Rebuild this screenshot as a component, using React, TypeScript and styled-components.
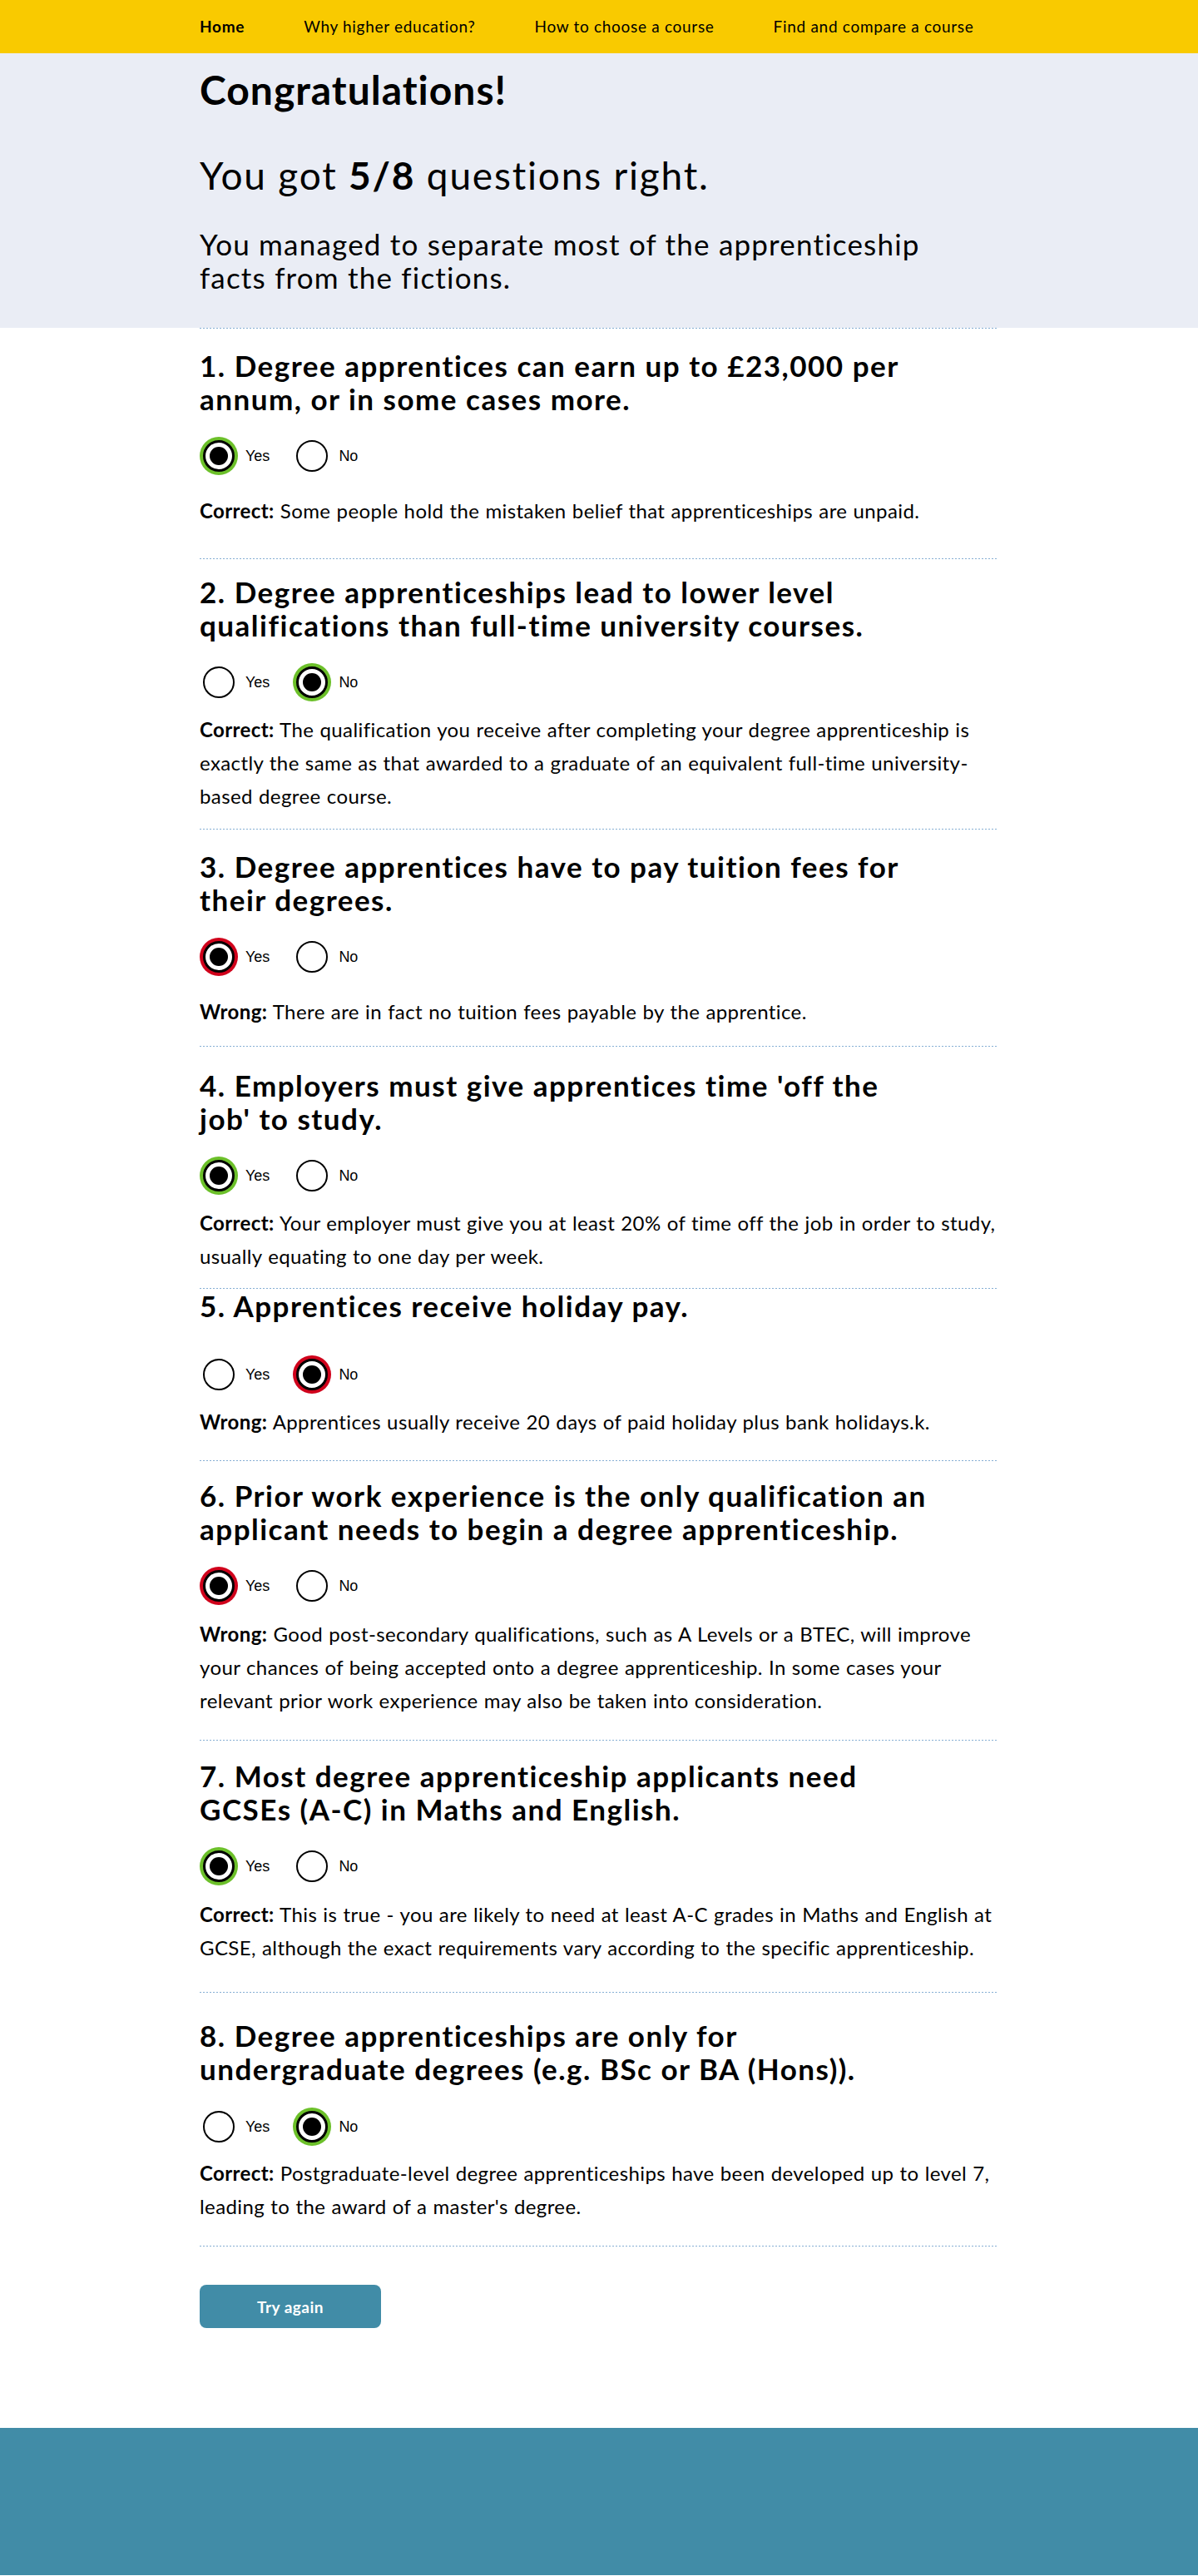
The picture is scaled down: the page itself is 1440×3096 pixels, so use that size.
import React from "react";
import styled, { createGlobalStyle, css } from "styled-components";

const GlobalStyle = createGlobalStyle`
  html, body { margin: 0; padding: 0; background: #ffffff; }
  body {
    font-family: Lato, "Open Sans", Arial, sans-serif;
    color: #000000;
    -webkit-font-smoothing: antialiased;
  }
  * { box-sizing: border-box; }
`;

type Status = "correct" | "wrong";
type Choice = "yes" | "no";

interface Spacing { t: number; m1: number; m2: number; b: number }
interface Question {
  n: number;
  title: string;
  choice: Choice;
  status: Status;
  explanation: string;
  sp: Spacing;
}

const questions: Question[] = [
  {
    n: 1,
    title: "Degree apprentices can earn up to £23,000 per annum, or in some cases more.",
    choice: "yes",
    status: "correct",
    explanation: "Some people hold the mistaken belief that apprenticeships are unpaid.",
    sp: { t: 24, m1: 30, m2: 27, b: 37 },
  },
  {
    n: 2,
    title: "Degree apprenticeships lead to lower level qualifications than full-time university courses.",
    choice: "no",
    status: "correct",
    explanation:
      "The qualification you receive after completing your degree apprenticeship is exactly the same as that awarded to a graduate of an equivalent full-time university-based degree course.",
    sp: { t: 19, m1: 30, m2: 18, b: 19 },
  },
  {
    n: 3,
    title: "Degree apprentices have to pay tuition fees for their degrees.",
    choice: "yes",
    status: "wrong",
    explanation: "There are in fact no tuition fees payable by the apprentice.",
    sp: { t: 24, m1: 30, m2: 27, b: 21 },
  },
  {
    n: 4,
    title: "Employers must give apprentices time 'off the job' to study.",
    choice: "yes",
    status: "correct",
    explanation:
      "Your employer must give you at least 20% of time off the job in order to study, usually equating to one day per week.",
    sp: { t: 26, m1: 30, m2: 18, b: 18 },
  },
  {
    n: 5,
    title: "Apprentices receive holiday pay.",
    choice: "no",
    status: "wrong",
    explanation: "Apprentices usually receive 20 days of paid holiday plus bank holidays.k.",
    sp: { t: 0, m1: 44, m2: 18, b: 26 },
  },
  {
    n: 6,
    title: "Prior work experience is the only qualification an applicant needs to begin a degree apprenticeship.",
    choice: "yes",
    status: "wrong",
    explanation:
      "Good post-secondary qualifications, such as A Levels or a BTEC, will improve your chances of being accepted onto a degree apprenticeship. In some cases your relevant prior work experience may also be taken into consideration.",
    sp: { t: 21, m1: 30, m2: 19, b: 27 },
  },
  {
    n: 7,
    title: "Most degree apprenticeship applicants need GCSEs (A-C) in Maths and English.",
    choice: "yes",
    status: "correct",
    explanation:
      "This is true - you are likely to need at least A-C grades in Maths and English at GCSE, although the exact requirements vary according to the specific apprenticeship.",
    sp: { t: 22, m1: 30, m2: 19, b: 33 },
  },
  {
    n: 8,
    title: "Degree apprenticeships are only for undergraduate degrees (e.g. BSc or BA (Hons)).",
    choice: "no",
    status: "correct",
    explanation:
      "Postgraduate-level degree apprenticeships have been developed up to level 7, leading to the award of a master's degree.",
    sp: { t: 31, m1: 31, m2: 17, b: 27 },
  },
];

const RING = { correct: "#6cc02a", wrong: "#d0021b" };
const DOT_COLOR = "#86afd4";
const dottedLine = (side: "top" | "bottom") => css`
  background-image: linear-gradient(to right, ${DOT_COLOR} 50%, transparent 50%);
  background-size: 4px 1px;
  background-repeat: repeat-x;
  background-position: left ${side};
`;

const NavBar = styled.nav`
  background: #f9ca00;
  height: 64px;
  display: flex;
  align-items: center;
`;

const Container = styled.div`
  width: 960px;
  margin: 0 auto;
`;

const NavList = styled(Container)`
  display: flex;
  align-items: center;
  gap: 71px;
  padding-left: 0;
`;

const NavLink = styled.a<{ $active?: boolean }>`
  font-size: 19px;
  line-height: 24px;
  letter-spacing: 0.7px;
  color: #000;
  text-decoration: none;
  font-weight: ${(p) => (p.$active ? 700 : 400)};
`;

const Hero = styled.header`
  background: #eaedf5;
  padding: 15px 0 41px;
`;

const Title = styled.h1`
  margin: 0;
  font-size: 48px;
  line-height: 58px;
  letter-spacing: 1px;
  font-weight: 700;
`;

const Score = styled.p`
  margin: 47px 0 0;
  font-size: 46px;
  line-height: 54px;
  letter-spacing: 1.8px;
  font-weight: 400;
  strong { font-weight: 700; }
`;

const Intro = styled.p`
  margin: 35px 0 0;
  max-width: 880px;
  font-size: 35px;
  line-height: 40px;
  letter-spacing: 1.2px;
  font-weight: 400;
`;

const QuestionList = styled(Container)`
  padding-top: 1px;
  ${dottedLine("top")}
`;

const QuestionBlock = styled.section<{ $sp: Spacing }>`
  padding-top: ${(p) => p.$sp.t}px;
  padding-bottom: ${(p) => p.$sp.b + 1}px;
  ${dottedLine("bottom")}
`;

const QuestionTitle = styled.h2`
  margin: 0;
  max-width: 880px;
  font-size: 35px;
  line-height: 40px;
  letter-spacing: 1.5px;
  font-weight: 700;
`;

const Options = styled.div<{ $gap: number }>`
  display: flex;
  align-items: center;
  gap: 32px;
  margin-top: ${(p) => p.$gap}px;
  padding-left: 4px;
`;

const Option = styled.label`
  display: flex;
  align-items: center;
  gap: 13px;
  font-family: "Liberation Sans", Arial, sans-serif;
  font-size: 18px;
  color: #000;
`;

const RadioMark = styled.span<{ $selected: boolean; $status: Status }>`
  position: relative;
  width: 38px;
  height: 38px;
  border-radius: 50%;
  border: 2px solid #000;
  background: #fff;
  flex: none;
  ${(p) =>
    p.$selected &&
    css`
      border-width: 3px;
      box-shadow: 0 0 0 4px ${RING[p.$status]};
      &::after {
        content: "";
        position: absolute;
        left: 50%;
        top: 50%;
        width: 22px;
        height: 22px;
        margin: -11px 0 0 -11px;
        border-radius: 50%;
        background: #000;
      }
    `}
`;

const Explanation = styled.p<{ $gap: number }>`
  margin: ${(p) => p.$gap}px 0 0;
  font-size: 24px;
  line-height: 40px;
  letter-spacing: 0.4px;
  word-spacing: 0.6px;
  strong { font-weight: 700; }
`;

const Actions = styled(Container)`
  padding: 46px 0 120px;
`;

const TryAgain = styled.button`
  width: 218px;
  height: 52px;
  border: none;
  border-radius: 8px;
  background: #418ca7;
  color: #fff;
  font-family: Lato, Arial, sans-serif;
  font-size: 19px;
  letter-spacing: 0.5px;
  font-weight: 700;
  cursor: pointer;
`;

const Footer = styled.footer`
  background: #418ca7;
  height: 177px;
`;

function QuestionItem({ q }: { q: Question }) {
  return (
    <QuestionBlock $sp={q.sp}>
      <QuestionTitle>
        {q.n}. {q.title}
      </QuestionTitle>
      <Options $gap={q.sp.m1}>
        {(["yes", "no"] as Choice[]).map((c) => (
          <Option key={c}>
            <RadioMark $selected={q.choice === c} $status={q.status} />
            {c === "yes" ? "Yes" : "No"}
          </Option>
        ))}
      </Options>
      <Explanation $gap={q.sp.m2}>
        <strong>{q.status === "correct" ? "Correct:" : "Wrong:"}</strong> {q.explanation}
      </Explanation>
    </QuestionBlock>
  );
}

export default function App() {
  return (
    <>
      <GlobalStyle />
      <NavBar>
        <NavList>
          <NavLink $active href="#">Home</NavLink>
          <NavLink href="#">Why higher education?</NavLink>
          <NavLink href="#">How to choose a course</NavLink>
          <NavLink href="#">Find and compare a course</NavLink>
        </NavList>
      </NavBar>
      <Hero>
        <Container>
          <Title>Congratulations!</Title>
          <Score>
            You got <strong>5/8</strong> questions right.
          </Score>
          <Intro>You managed to separate most of the apprenticeship facts from the fictions.</Intro>
        </Container>
      </Hero>
      <QuestionList>
        {questions.map((q) => (
          <QuestionItem key={q.n} q={q} />
        ))}
      </QuestionList>
      <Actions>
        <TryAgain type="button">Try again</TryAgain>
      </Actions>
      <Footer />
    </>
  );
}
